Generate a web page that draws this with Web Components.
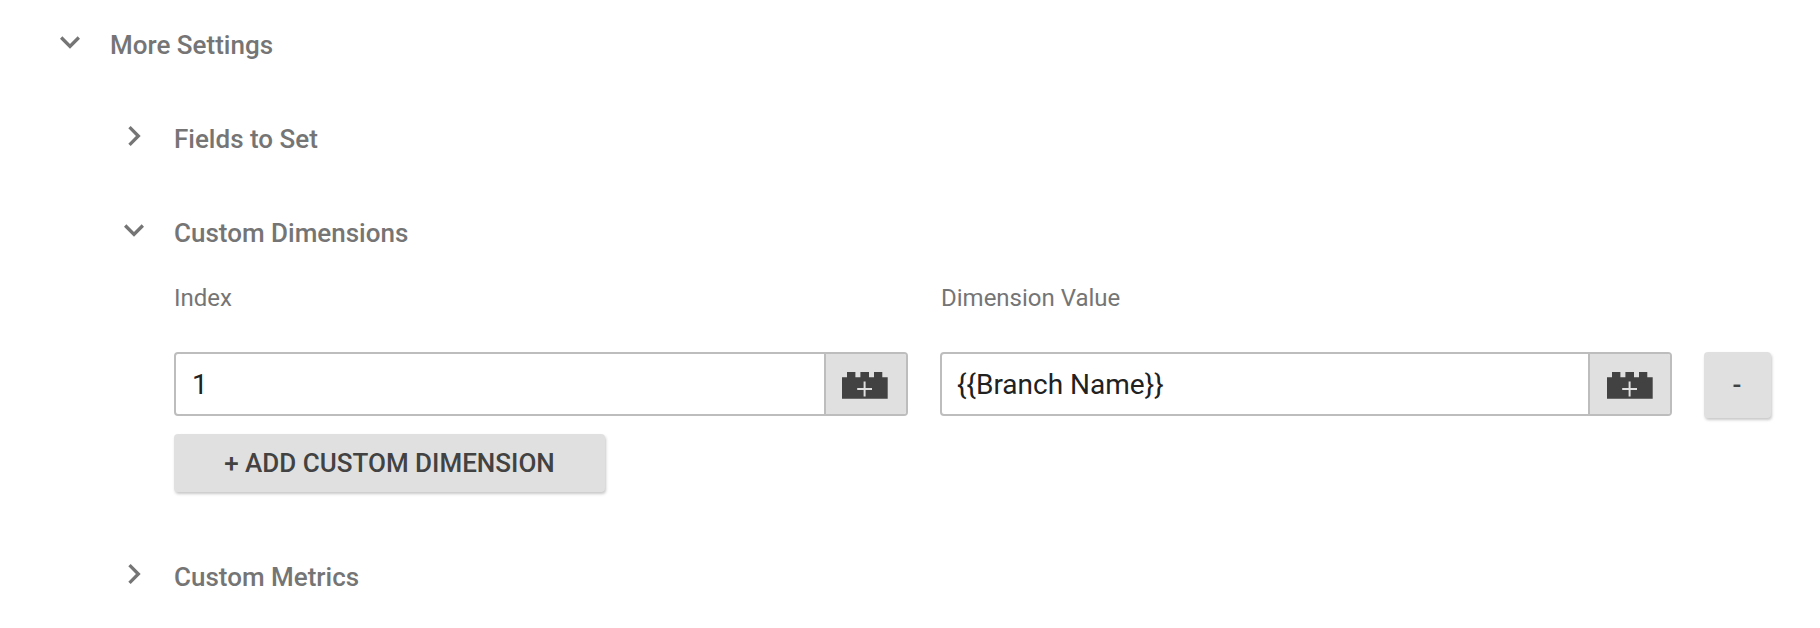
<!DOCTYPE html>
<html lang="en">
<head>
<meta charset="utf-8">
<title>Tag settings</title>
<style>
html,body{margin:0;background:#fff}
body{font-family:Roboto,"Liberation Sans",sans-serif;color:#757575;width:1820px;height:628px;overflow:hidden}
</style>
</head>
<body>
<settings-panel></settings-panel>
<script>
const define = (name, html, setup) => customElements.define(name, class extends HTMLElement {
  constructor() {
    super();
    const t = document.createElement('template');
    t.innerHTML = html;
    this.attachShadow({mode: 'open'}).append(t.content.cloneNode(true));
  }
  connectedCallback() { if (setup) setup(this, this.shadowRoot); }
});

define('chevron-icon', `
<style>
:host{display:block;width:40px;height:40px}
svg{display:block;fill:#757575}
.down{display:none}
:host([open]) .down{display:inline}
:host([open]) .right{display:none}
</style>
<svg width="40" height="40" viewBox="0 0 24 24">
<path class="right" d="M10 6L8.59 7.41 13.17 12l-4.58 4.59L10 18l6-6z"/>
<path class="down" d="M16.59 8.59L12 13.17 7.41 8.59 6 10l6 6 6-6z"/>
</svg>`);

define('section-header', `
<style>
:host{display:flex;gap:20px;height:40px;font-size:26px;font-weight:500;line-height:40px;white-space:nowrap}
span{padding-top:3px}
</style>
<chevron-icon></chevron-icon><span><slot></slot></span>`,
(el, root) => root.querySelector('chevron-icon').toggleAttribute('open', el.hasAttribute('open')));

define('brick-icon', `
<style>:host{display:block;width:46px;height:27px}svg{display:block}</style>
<svg width="46" height="27" viewBox="0 0 46 27">
<path fill="#424242" d="M0 5.3H5V0h8.4v5.3h5V0H27v5.3h5V0h8.3v5.3h5.4V26.8H0z"/>
<path fill="none" stroke="#e0e0e0" stroke-width="2" d="M15.2 17h14.8M22.6 9.6v14.8"/>
</svg>`);

define('variable-input', `
<style>
:host{display:flex;box-sizing:border-box;height:64px;border:2px solid #bdbdbd;border-radius:4px;overflow:hidden;background:#fff}
.value{flex:1;padding:1px 0 0 var(--inset,15px);font-size:28px;line-height:60px;color:#212121}
.pick{box-sizing:border-box;width:var(--pick,84px);border-left:2px solid #bdbdbd;background:#e0e0e0;padding:18px 0 0 var(--brick,16px)}
</style>
<div class="value"><slot></slot></div><div class="pick"><brick-icon></brick-icon></div>`);

define('raised-button', `
<style>
:host{display:flex;box-sizing:border-box;align-items:center;justify-content:center;background:#e0e0e0;border-radius:4px;box-shadow:1px 2px 3px rgba(0,0,0,.22);color:#424242;font-size:26px;font-weight:500;white-space:nowrap}
</style>
<slot></slot>`);

define('settings-panel', `
<style>
:host{display:block;padding:22px 0 0 50px}
.nested{padding:54px 0 0 64px}
.open{margin-top:54px}
.body{padding:32px 0 0 60px}
.grid{display:grid;grid-template-columns:734px 732px 67px;column-gap:32px}
.label{font-size:24px;line-height:32px;height:70px;padding-left:1px}
.label:first-child{padding-left:0}
.first{--inset:16px;--pick:82px}
.second{--pick:82px;--brick:17px}
.remove{height:66px;padding-right:1px}
.add{width:431px;height:58px;margin-top:16px}
.last{margin-top:62px}
</style>
<section-header open>More Settings</section-header>
<div class="nested">
<section-header>Fields to Set</section-header>
<section-header class="open" open>Custom Dimensions</section-header>
<div class="body">
<div class="grid">
<div class="label">Index</div><div class="label">Dimension Value</div><div></div>
<variable-input class="first">1</variable-input>
<variable-input class="second">{{Branch Name}}</variable-input>
<raised-button class="remove">-</raised-button>
</div>
<raised-button class="add">+ ADD CUSTOM DIMENSION</raised-button>
</div>
<section-header class="last">Custom Metrics</section-header>
</div>`);
</script>
</body>
</html>
